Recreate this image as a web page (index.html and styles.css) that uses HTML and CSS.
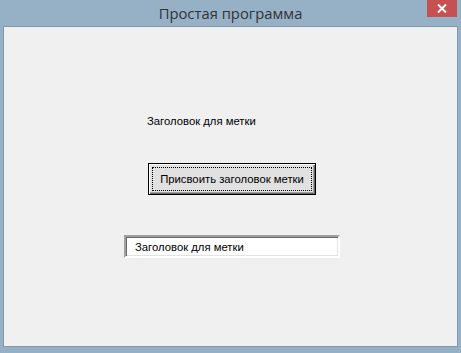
FILE: index.html
```html
<!DOCTYPE html>
<html lang="ru">
<head>
  <meta charset="UTF-8" />
  <title>Простая программа</title>
  <link rel="stylesheet" href="styles.css">
</head>
<body>
  <div class="window">
    <div class="titlebar">
      <span class="title">Простая программа</span>
      <button class="close" aria-label="Закрыть">
        <svg width="10" height="9" viewBox="0 0 10 9">
          <path d="M1 0.5 L9 8.5 M9 0.5 L1 8.5" stroke="#fff" stroke-width="2" />
        </svg>
      </button>
    </div>

    <div class="client">
      <div class="label">Заголовок для метки</div>
      <button class="btn default"><span class="focus">Присвоить заголовок метки</span></button>
      <input class="textbox" type="text" value="Заголовок для метки" />
    </div>
  </div>
</body>
</html>
```

FILE: styles.css
```css
* {
  box-sizing: border-box;
}

html, body {
  margin: 0;
  padding: 0;
}

body {
  width: 461px;
  height: 353px;
  background: #96b1c5;
  font-family: 'Liberation Sans', Arial, sans-serif;
  font-size: 11.3px;
  color: #000;
  overflow: hidden;
}

.window {
  display: flex;
  flex-direction: column;
  height: 353px;
}

.titlebar {
  position: relative;
  height: 26px;
  display: flex;
  justify-content: center;
  align-items: center;
}

.title {
  font-family: 'Open Sans', 'Noto Sans', sans-serif;
  font-size: 14.8px;
  color: #333;
  padding-bottom: 1px;
}

.close {
  position: absolute;
  top: 0;
  left: 427px;
  width: 30px;
  height: 17px;
  border: none;
  padding: 0;
  background: #c75050;
  display: flex;
  align-items: center;
  justify-content: center;
}

.client {
  flex: 1;
  margin: 0 3px 6px 3px;
  background: #f0f0f0;
  border: 1px solid #7f98aa;
  display: flex;
  flex-direction: column;
  align-items: flex-start;
}

.label {
  margin: 88px 0 0 143px;
  line-height: 13px;
}

.btn {
  margin: 35px 0 0 144px;
  width: 168px;
  height: 32px;
  padding: 3px;
  font-family: inherit;
  font-size: 11.3px;
  color: #000;
  background: #e1e1e1;
  border: 1px solid #000;
  box-shadow: inset 1px 1px 0 #fff, inset -1px -1px 0 #696969, inset -2px -2px 0 #a0a0a0;
  display: flex;
}

.focus {
  flex: 1;
  display: flex;
  align-items: center;
  justify-content: center;
  border: 1px dotted #000;
}

.textbox {
  margin: 40px 0 0 120px;
  width: 216px;
  height: 23px;
  padding: 0 0 0 9px;
  font-family: inherit;
  font-size: 11.3px;
  color: #000;
  background: #fff;
  border: 2px solid;
  border-color: #a0a0a0 #fff #fff #a0a0a0;
  box-shadow: inset 1px 1px 0 #696969, inset -1px -1px 0 #e3e3e3;
  outline: none;
}
```
